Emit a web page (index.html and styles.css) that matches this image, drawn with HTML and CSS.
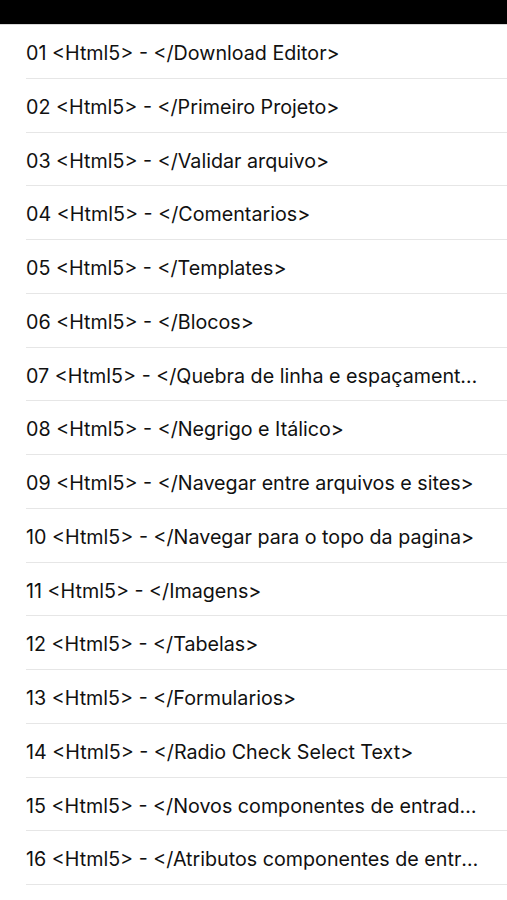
FILE: index.html
```html
<!DOCTYPE html>
<html lang="pt">
<head>
    <meta charset="UTF-8">
    <meta name="viewport" content="width=device-width, initial-scale=1.0">
    <title>Aulas Html5</title>
    <link rel="stylesheet" href="styles.css">
</head>
<body>

    <div class="barra-status"></div>

    <ul class="lista-aulas">
        <li>01 &lt;Html5&gt; - &lt;/Download Editor&gt;</li>
        <li>02 &lt;Html5&gt; - &lt;/Primeiro Projeto&gt;</li>
        <li>03 &lt;Html5&gt; - &lt;/Validar arquivo&gt;</li>
        <li>04 &lt;Html5&gt; - &lt;/Comentarios&gt;</li>
        <li>05 &lt;Html5&gt; - &lt;/Templates&gt;</li>
        <li>06 &lt;Html5&gt; - &lt;/Blocos&gt;</li>
        <li>07 &lt;Html5&gt; - &lt;/Quebra de linha e espaçamento&gt;</li>
        <li>08 &lt;Html5&gt; - &lt;/Negrigo e Itálico&gt;</li>
        <li>09 &lt;Html5&gt; - &lt;/Navegar entre arquivos e sites&gt;</li>
        <li>10 &lt;Html5&gt; - &lt;/Navegar para o topo da pagina&gt;</li>
        <li>11 &lt;Html5&gt; - &lt;/Imagens&gt;</li>
        <li>12 &lt;Html5&gt; - &lt;/Tabelas&gt;</li>
        <li>13 &lt;Html5&gt; - &lt;/Formularios&gt;</li>
        <li>14 &lt;Html5&gt; - &lt;/Radio Check Select Text&gt;</li>
        <li>15 &lt;Html5&gt; - &lt;/Novos componentes de entrada&gt;</li>
        <li>16 &lt;Html5&gt; - &lt;/Atributos componentes de entrada&gt;</li>
    </ul>

</body>
</html>
```

FILE: styles.css
```css
body {
    margin: 0;
    background-color: #fff;
    font-family: Inter, "Liberation Sans", sans-serif;
    color: #111;
}
.barra-status {
    height: 25px;
    background-color: #000;
    border-bottom: 1px solid #d8d8d8;
    box-sizing: border-box;
}
.lista-aulas {
    list-style: none;
    margin: 0;
    padding: 0 0 0 26px;
}
.lista-aulas li {
    height: 53.75px;
    box-sizing: border-box;
    border-bottom: 1px solid #e6e6e6;
    padding-right: 26px;
    font-size: 19.7px;
    line-height: 57px;
    white-space: nowrap;
    overflow: hidden;
    text-overflow: ellipsis;
}
```
